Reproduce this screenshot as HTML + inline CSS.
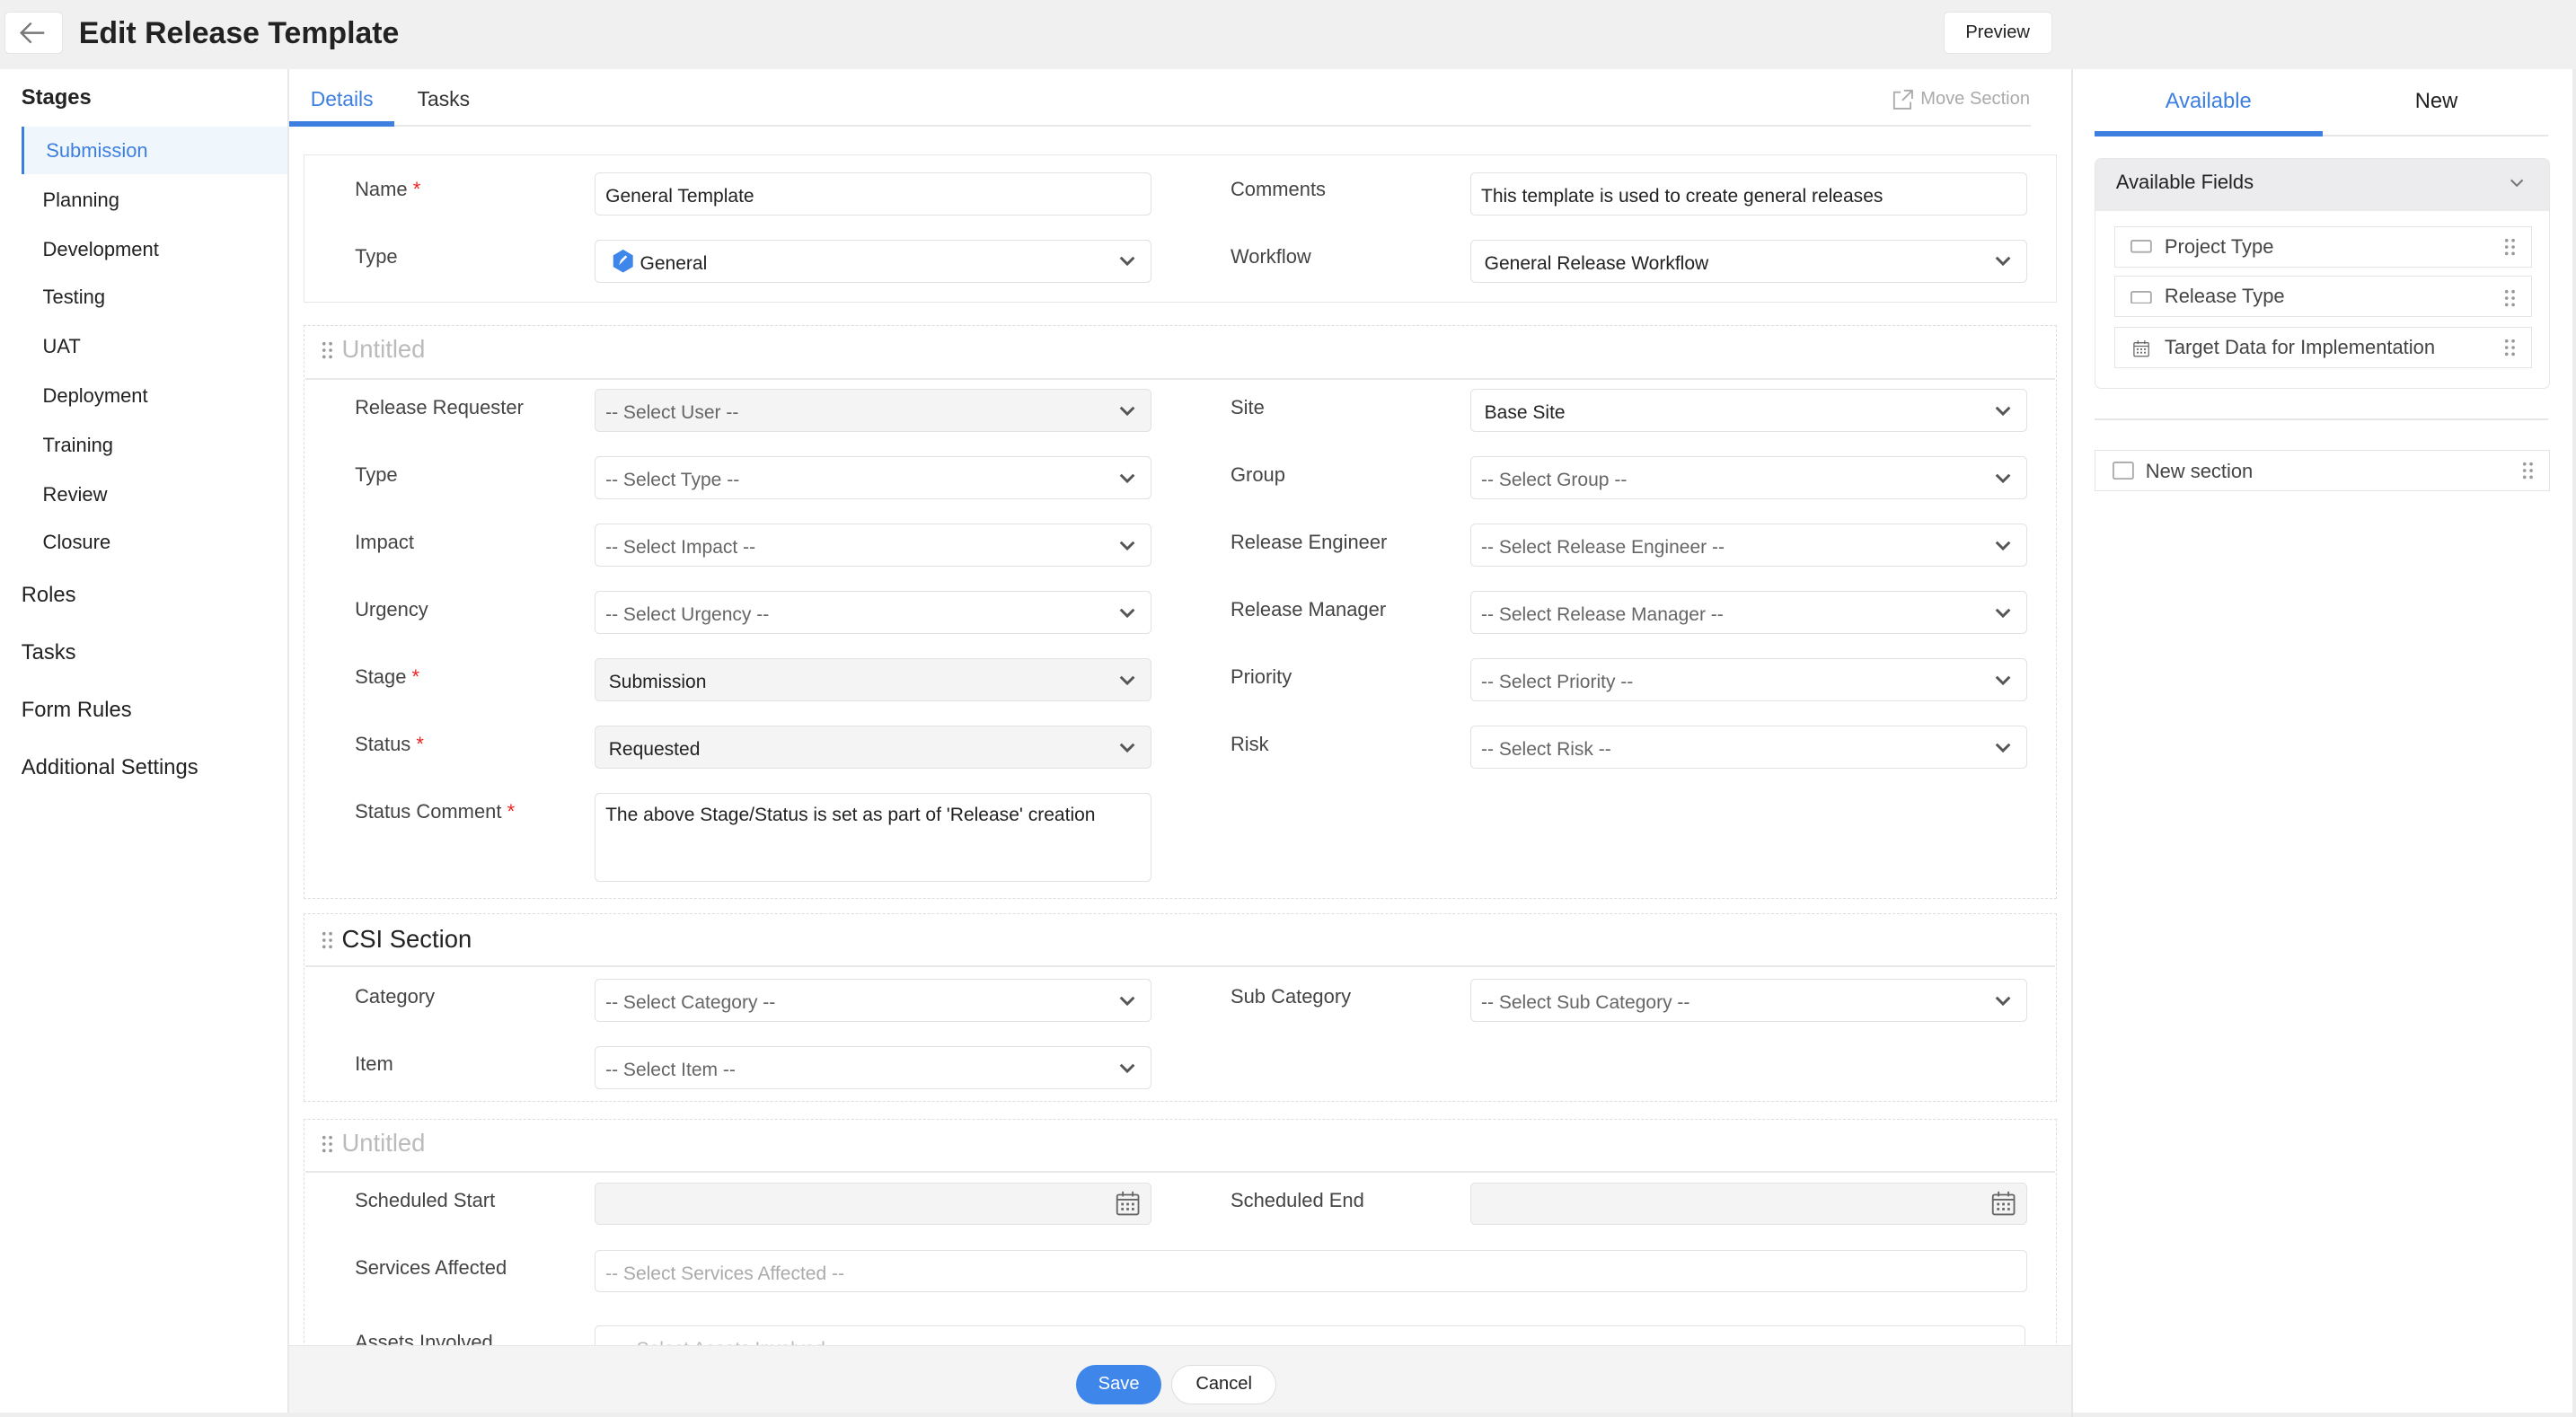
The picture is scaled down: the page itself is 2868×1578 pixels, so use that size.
<!DOCTYPE html>
<html><head><meta charset="utf-8">
<style>
*{box-sizing:border-box;margin:0;padding:0}
html,body{width:2868px;height:1578px;overflow:hidden;background:#fff}
#w{zoom:1.82908;width:1568px;height:863px;position:relative;font-family:"Liberation Sans",sans-serif;color:#333;overflow:hidden}
.a{position:absolute}
.t{position:absolute;font-size:12px;color:#444;white-space:nowrap}
.in{position:absolute;height:26px;border:1px solid #e2e2e2;border-radius:3px;background:#fff;font-size:11.5px;color:#222;padding:1px 0 0 6px;line-height:26px;white-space:nowrap}
.g{background:#f4f4f4}
.ph{color:#666}
.chev{position:absolute;right:9px;top:9px;width:11px;height:8px}
.sec{position:absolute;left:185px;width:1067px;border:1px dashed #ddd}
.sh{position:absolute;font-size:15px;color:#bbb}
.grip{position:absolute;width:7px;height:11px}
.req{color:#e22}
.side{position:absolute;left:26px;font-size:12px;color:#222}
.fi{position:absolute;left:1287px;width:254px;height:25px;border:1px solid #e4e4e4;font-size:12px;color:#444;line-height:24px;padding-left:30px}
</style></head><body><div id="w">
<svg width="0" height="0" style="position:absolute"><defs>
<symbol id="cv" viewBox="0 0 11 8"><path d="M1.5 1.5 L5.5 5.5 L9.5 1.5" fill="none" stroke="#555" stroke-width="1.6"/></symbol>
<symbol id="gp" viewBox="0 0 7 11"><g fill="#999"><circle cx="1.5" cy="1.5" r="1"/><circle cx="5.5" cy="1.5" r="1"/><circle cx="1.5" cy="5.5" r="1"/><circle cx="5.5" cy="5.5" r="1"/><circle cx="1.5" cy="9.5" r="1"/><circle cx="5.5" cy="9.5" r="1"/></g></symbol>
<symbol id="cal" viewBox="0 0 16 16"><rect x="1.5" y="3" width="13" height="12" rx="1" fill="none" stroke="#666"/><path d="M1.5 6h13M5 1v3M11 1v3" stroke="#666"/><g fill="#666"><rect x="4" y="8" width="1.5" height="1.5"/><rect x="7.2" y="8" width="1.5" height="1.5"/><rect x="10.4" y="8" width="1.5" height="1.5"/><rect x="4" y="11" width="1.5" height="1.5"/><rect x="7.2" y="11" width="1.5" height="1.5"/><rect x="10.4" y="11" width="1.5" height="1.5"/></g></symbol>
</defs></svg>

<div class="a" style="left:0;top:0;width:1568px;height:42px;background:#f0f0f0"></div>
<div class="a" style="left:3px;top:7px;width:35px;height:26px;background:#fff;border:1px solid #e6e6e6;border-radius:3px"></div>
<svg class="a" style="left:11px;top:12px" width="18" height="16" viewBox="0 0 18 16"><path d="M16 8H2M8 2L2 8l6 6" fill="none" stroke="#777" stroke-width="1.3"/></svg>
<div class="t" style="left:48px;top:10px;font-size:18.5px;font-weight:bold;color:#222">Edit Release Template</div>
<div class="a" style="left:1183px;top:7px;width:66px;height:26px;background:#fff;border:1px solid #e6e6e6;border-radius:3px;font-size:11px;color:#222;text-align:center;line-height:25px">Preview</div>

<div class="a" style="left:175px;top:42px;width:1px;height:821px;background:#e8e8e8"></div>
<div class="t" style="left:13px;top:52px;font-size:13px;color:#222;font-weight:bold">Stages</div>
<div class="a" style="left:13px;top:77px;width:162px;height:29px;background:#f0f7fc;border-left:2px solid #3d7fe0"></div>
<div class="side" style="top:85px;left:28px;color:#3d7fe0">Submission</div>
<div class="side" style="top:115px">Planning</div>
<div class="side" style="top:145px">Development</div>
<div class="side" style="top:174px">Testing</div>
<div class="side" style="top:204px">UAT</div>
<div class="side" style="top:234px">Deployment</div>
<div class="side" style="top:264px">Training</div>
<div class="side" style="top:294px">Review</div>
<div class="side" style="top:323px">Closure</div>
<div class="t" style="left:13px;top:355px;font-size:13px;color:#222">Roles</div>
<div class="t" style="left:13px;top:390px;font-size:13px;color:#222">Tasks</div>
<div class="t" style="left:13px;top:425px;font-size:13px;color:#222">Form Rules</div>
<div class="t" style="left:13px;top:460px;font-size:13px;color:#222">Additional Settings</div>

<div class="t" style="left:189px;top:53px;font-size:12.5px;color:#3d7fe0">Details</div>
<div class="t" style="left:254px;top:53px;font-size:12.5px;color:#333">Tasks</div>
<div class="a" style="left:176px;top:76px;width:1060px;height:1px;background:#e8e8e8"></div>
<div class="a" style="left:176px;top:74px;width:64px;height:3px;background:#3d7fe0"></div>
<svg class="a" style="left:1152px;top:54px" width="13" height="13" viewBox="0 0 13 13"><path d="M5 2H1v10h10V8M7 1h5v5M12 1L6 7" fill="none" stroke="#aaa"/></svg>
<div class="t" style="left:1169px;top:54px;font-size:11px;color:#aaa">Move Section</div>

<div class="a" style="left:185px;top:94px;width:1067px;height:90px;border:1px solid #e6e6e6"></div>
<div class="t" style="left:216px;top:108px">Name <span class="req">*</span></div>
<div class="in" style="left:362px;top:105px;width:339px">General Template</div>
<div class="t" style="left:749px;top:108px">Comments</div>
<div class="in" style="left:895px;top:105px;width:339px">This template is used to create general releases</div>
<div class="t" style="left:216px;top:149px">Type</div>
<div class="in" style="left:362px;top:146px;width:339px;padding-left:27px">General<svg class="a" style="left:9px;top:5px" width="15" height="15" viewBox="0 0 15 15"><path d="M7.5 0.5L13.5 4v7l-6 3.5L1.5 11V4z" fill="#3f86ea"/><path d="M5 10l1-3 3-3 1 1-3 3z" fill="#fff"/></svg><svg class="chev"><use href="#cv"/></svg></div>
<div class="t" style="left:749px;top:149px">Workflow</div>
<div class="in" style="left:895px;top:146px;width:339px;padding-left:8px">General Release Workflow<svg class="chev"><use href="#cv"/></svg></div>

<div class="sec" style="top:198px;height:349px"></div>
<div class="a" style="left:186px;top:230px;width:1065px;height:1px;background:#e8e8e8"></div>
<svg class="grip" style="left:196px;top:208px"><use href="#gp"/></svg>
<div class="sh" style="left:208px;top:204px">Untitled</div>

<div class="t" style="left:216px;top:241px">Release Requester</div>
<div class="in g ph" style="left:362px;top:237px;width:339px">-- Select User --<svg class="chev"><use href="#cv"/></svg></div>
<div class="t" style="left:749px;top:241px">Site</div>
<div class="in" style="left:895px;top:237px;width:339px;padding-left:8px">Base Site<svg class="chev"><use href="#cv"/></svg></div>

<div class="t" style="left:216px;top:282px">Type</div>
<div class="in ph" style="left:362px;top:278px;width:339px">-- Select Type --<svg class="chev"><use href="#cv"/></svg></div>
<div class="t" style="left:749px;top:282px">Group</div>
<div class="in ph" style="left:895px;top:278px;width:339px">-- Select Group --<svg class="chev"><use href="#cv"/></svg></div>

<div class="t" style="left:216px;top:323px">Impact</div>
<div class="in ph" style="left:362px;top:319px;width:339px">-- Select Impact --<svg class="chev"><use href="#cv"/></svg></div>
<div class="t" style="left:749px;top:323px">Release Engineer</div>
<div class="in ph" style="left:895px;top:319px;width:339px">-- Select Release Engineer --<svg class="chev"><use href="#cv"/></svg></div>

<div class="t" style="left:216px;top:364px">Urgency</div>
<div class="in ph" style="left:362px;top:360px;width:339px">-- Select Urgency --<svg class="chev"><use href="#cv"/></svg></div>
<div class="t" style="left:749px;top:364px">Release Manager</div>
<div class="in ph" style="left:895px;top:360px;width:339px">-- Select Release Manager --<svg class="chev"><use href="#cv"/></svg></div>

<div class="t" style="left:216px;top:405px">Stage <span class="req">*</span></div>
<div class="in g" style="left:362px;top:401px;width:339px;padding-left:8px">Submission<svg class="chev"><use href="#cv"/></svg></div>
<div class="t" style="left:749px;top:405px">Priority</div>
<div class="in ph" style="left:895px;top:401px;width:339px">-- Select Priority --<svg class="chev"><use href="#cv"/></svg></div>

<div class="t" style="left:216px;top:446px">Status <span class="req">*</span></div>
<div class="in g" style="left:362px;top:442px;width:339px;padding-left:8px">Requested<svg class="chev"><use href="#cv"/></svg></div>
<div class="t" style="left:749px;top:446px">Risk</div>
<div class="in ph" style="left:895px;top:442px;width:339px">-- Select Risk --<svg class="chev"><use href="#cv"/></svg></div>

<div class="t" style="left:216px;top:487px">Status Comment <span class="req">*</span></div>
<div class="in" style="left:362px;top:483px;width:339px;height:54px;line-height:24px">The above Stage/Status is set as part of 'Release' creation</div>

<div class="sec" style="top:556px;height:115px"></div>
<div class="a" style="left:186px;top:588px;width:1065px;height:1px;background:#e8e8e8"></div>
<svg class="grip" style="left:196px;top:567px"><use href="#gp"/></svg>
<div class="sh" style="left:208px;top:563px;color:#222">CSI Section</div>
<div class="t" style="left:216px;top:600px">Category</div>
<div class="in ph" style="left:362px;top:596px;width:339px">-- Select Category --<svg class="chev"><use href="#cv"/></svg></div>
<div class="t" style="left:749px;top:600px">Sub Category</div>
<div class="in ph" style="left:895px;top:596px;width:339px">-- Select Sub Category --<svg class="chev"><use href="#cv"/></svg></div>
<div class="t" style="left:216px;top:641px">Item</div>
<div class="in ph" style="left:362px;top:637px;width:339px">-- Select Item --<svg class="chev"><use href="#cv"/></svg></div>

<div class="sec" style="top:681px;height:200px"></div>
<div class="a" style="left:186px;top:713px;width:1065px;height:1px;background:#e8e8e8"></div>
<svg class="grip" style="left:196px;top:691px"><use href="#gp"/></svg>
<div class="sh" style="left:208px;top:687px">Untitled</div>
<div class="t" style="left:216px;top:724px">Scheduled Start</div>
<div class="in g" style="left:362px;top:720px;width:339px"><svg class="a" style="right:6px;top:4px" width="16" height="16"><use href="#cal"/></svg></div>
<div class="t" style="left:749px;top:724px">Scheduled End</div>
<div class="in g" style="left:895px;top:720px;width:339px"><svg class="a" style="right:6px;top:4px" width="16" height="16"><use href="#cal"/></svg></div>
<div class="t" style="left:216px;top:765px">Services Affected</div>
<div class="in" style="left:362px;top:761px;width:872px;color:#aaa">-- Select Services Affected --</div>
<div class="t" style="left:216px;top:810px">Assets Involved</div>
<div class="in" style="left:362px;top:807px;width:871px;color:#bbb;padding-left:14px">-- Select Assets Involved --</div>

<div class="a" style="left:176px;top:819px;width:1085px;height:44px;background:#f4f4f4;border-top:1px solid #e6e6e6"></div>
<div class="a" style="left:655px;top:831px;width:52px;height:24px;background:#3f86ea;border-radius:12px;color:#fff;font-size:11px;text-align:center;line-height:24px">Save</div>
<div class="a" style="left:713px;top:831px;width:64px;height:24px;background:#fff;border:1px solid #ddd;border-radius:12px;color:#222;font-size:11px;text-align:center;line-height:22px">Cancel</div>
<div class="a" style="left:0;top:860px;width:1568px;height:3px;background:#eee"></div>

<div class="a" style="left:1261px;top:42px;width:1px;height:821px;background:#e6e6e6"></div>
<div class="a" style="left:1566px;top:42px;width:2px;height:821px;background:#ececec"></div>
<div class="t" style="left:1318px;top:54px;font-size:13px;color:#3d7fe0">Available</div>
<div class="t" style="left:1470px;top:54px;font-size:13px;color:#222">New</div>
<div class="a" style="left:1275px;top:82px;width:276px;height:1px;background:#e6e6e6"></div>
<div class="a" style="left:1275px;top:80px;width:139px;height:3px;background:#3d7fe0"></div>
<div class="a" style="left:1275px;top:96px;width:277px;height:141px;border:1px solid #e6e6e6;border-radius:4px;overflow:hidden"><div style="height:32px;background:#ececef"></div></div>
<div class="t" style="left:1288px;top:104px;font-size:12px;color:#222;font-weight:500">Available Fields</div>
<svg class="a" style="left:1527px;top:108px" width="10" height="7" viewBox="0 0 11 8"><path d="M1.5 1.5 L5.5 5.5 L9.5 1.5" fill="none" stroke="#777" stroke-width="1.3"/></svg>
<div class="fi" style="top:138px">Project Type</div>
<div class="fi" style="top:168px">Release Type</div>
<div class="fi" style="top:199px">Target Data for Implementation</div>
<svg class="a" style="left:1297px;top:146px" width="13" height="8"><rect x="0.5" y="0.5" width="12" height="7" rx="1" fill="none" stroke="#aaa"/></svg>
<svg class="a" style="left:1297px;top:177px" width="13" height="8"><rect x="0.5" y="0.5" width="12" height="7" rx="1" fill="none" stroke="#aaa"/></svg>
<svg class="a" style="left:1298px;top:206px" width="11" height="12" viewBox="0 0 16 16"><use href="#cal"/></svg>
<svg class="grip" style="left:1524px;top:145px"><use href="#gp"/></svg>
<svg class="grip" style="left:1524px;top:176px"><use href="#gp"/></svg>
<svg class="grip" style="left:1524px;top:206px"><use href="#gp"/></svg>
<div class="a" style="left:1275px;top:255px;width:276px;height:1px;background:#e6e6e6"></div>
<div class="a" style="left:1275px;top:274px;width:277px;height:25px;border:1px solid #e4e4e4"></div>
<svg class="a" style="left:1286px;top:281px" width="13" height="11"><rect x="0.5" y="0.5" width="12" height="10" rx="1" fill="none" stroke="#aaa"/></svg>
<div class="t" style="left:1306px;top:280px;font-size:12px;color:#444">New section</div>
<svg class="grip" style="left:1535px;top:281px"><use href="#gp"/></svg>
</div></body></html>
